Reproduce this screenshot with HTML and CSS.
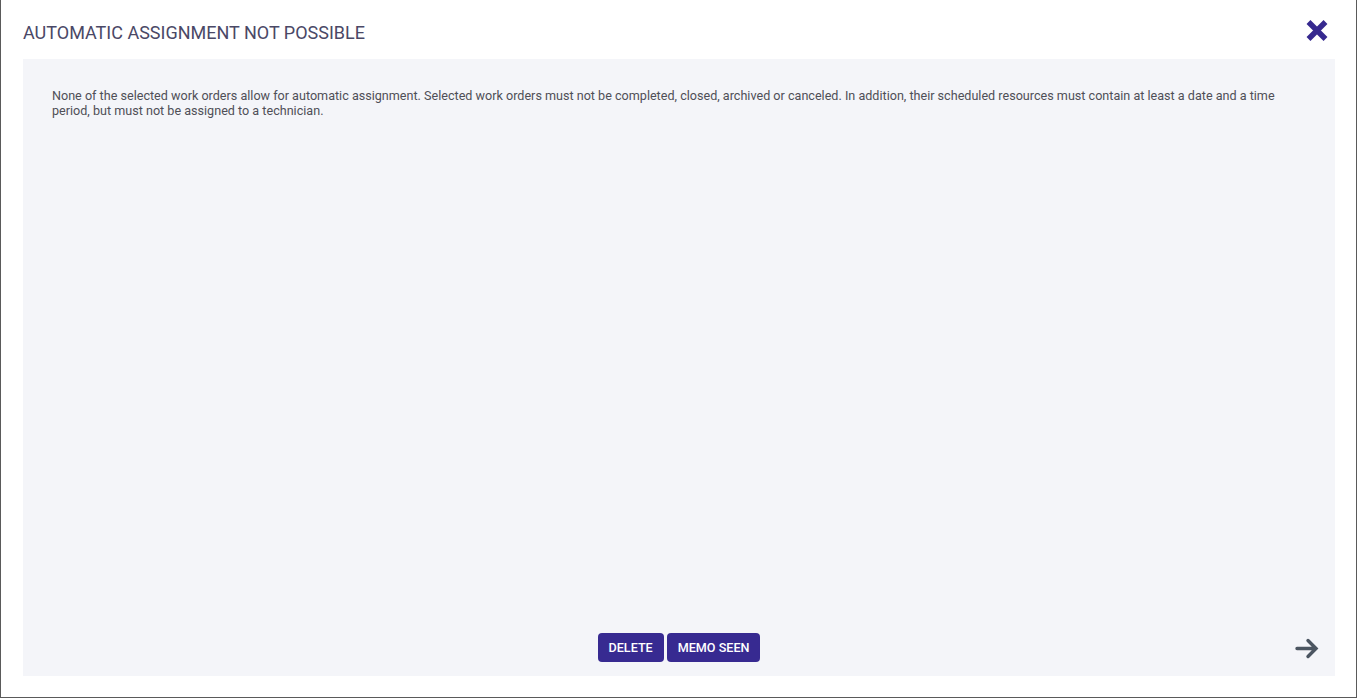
FILE: index.html
```html
<!DOCTYPE html>
<html lang="en">
<head>
    <meta charset="UTF-8">
    <meta name="viewport" content="width=device-width, initial-scale=1.0">
    <title>Automatic assignment</title>
    <link rel="stylesheet" href="styles.css">
</head>
<body>
    <div class="dialog">
        <div class="dialog-header">
            <h1 class="dialog-title">AUTOMATIC ASSIGNMENT NOT POSSIBLE</h1>
            <button class="close-btn" title="Close">
                <svg width="22" height="21" viewBox="0 0 22 21">
                    <path d="M2.5 2 L19.5 19 M19.5 2 L2.5 19" stroke="#36298f" stroke-width="5.5" stroke-linecap="butt" fill="none"/>
                </svg>
            </button>
        </div>
        <div class="dialog-body">
            <p class="memo-text">None of the selected work orders allow for automatic assignment. Selected work orders must not be completed, closed, archived or canceled. In addition, their scheduled resources must contain at least a date and a time period, but must not be assigned to a technician.</p>
            <div class="dialog-footer">
                <div></div>
                <div class="actions">
                    <button class="btn">DELETE</button>
                    <button class="btn">MEMO SEEN</button>
                </div>
                <button class="next-btn" title="Next">
                    <svg width="24" height="23" viewBox="0 0 24 23">
                        <path d="M2 11.5 H21 M13 3.5 L21 11.5 L13 19.5" stroke="#4b5561" stroke-width="3.4" stroke-linecap="round" stroke-linejoin="miter" fill="none"/>
                    </svg>
                </button>
            </div>
        </div>
    </div>
</body>
</html>
```

FILE: styles.css
```css
html, body {
    margin: 0;
    height: 100%;
    background: #fff;
}
body {
    font-family: Roboto, "Liberation Sans", Arial, sans-serif;
}
.dialog {
    box-sizing: border-box;
    width: 1357px;
    height: 698px;
    border: 1px solid #5a5a5a;
    border-top: none;
    background: #fff;
    display: flex;
    flex-direction: column;
}
.dialog-header {
    height: 59px;
    display: flex;
    align-items: center;
    justify-content: space-between;
    padding: 0 28px 0 22px;
    flex-shrink: 0;
}
.dialog-title {
    margin: 0;
    font-size: 18px;
    font-weight: 400;
    color: #4a4866;
    padding-top: 5px;
}
.close-btn, .next-btn {
    background: none;
    border: none;
    padding: 0;
    cursor: pointer;
    display: flex;
}
.close-btn {
    margin-top: 2px;
}
.dialog-body {
    flex: 1;
    margin: 0 21px 21px 22px;
    background: #f4f5f9;
    display: flex;
    flex-direction: column;
    padding: 29px 29px 14px 29px;
}
.memo-text {
    margin: 0;
    flex: 1;
    font-size: 12.6px;
    line-height: 15px;
    color: #4f4f57;
}
.dialog-footer {
    display: grid;
    grid-template-columns: 1fr auto 1fr;
    align-items: center;
}
.actions {
    display: flex;
    gap: 3px;
}
.btn {
    height: 29px;
    padding: 0 11px;
    background: #372a91;
    color: #fff;
    border: none;
    border-radius: 4px;
    font-family: Roboto, "Liberation Sans", Arial, sans-serif;
    font-size: 12.6px;
    font-weight: 500;
    cursor: pointer;
}
.next-btn {
    justify-self: end;
    margin-right: -13px;
    margin-top: 2px;
}
```
